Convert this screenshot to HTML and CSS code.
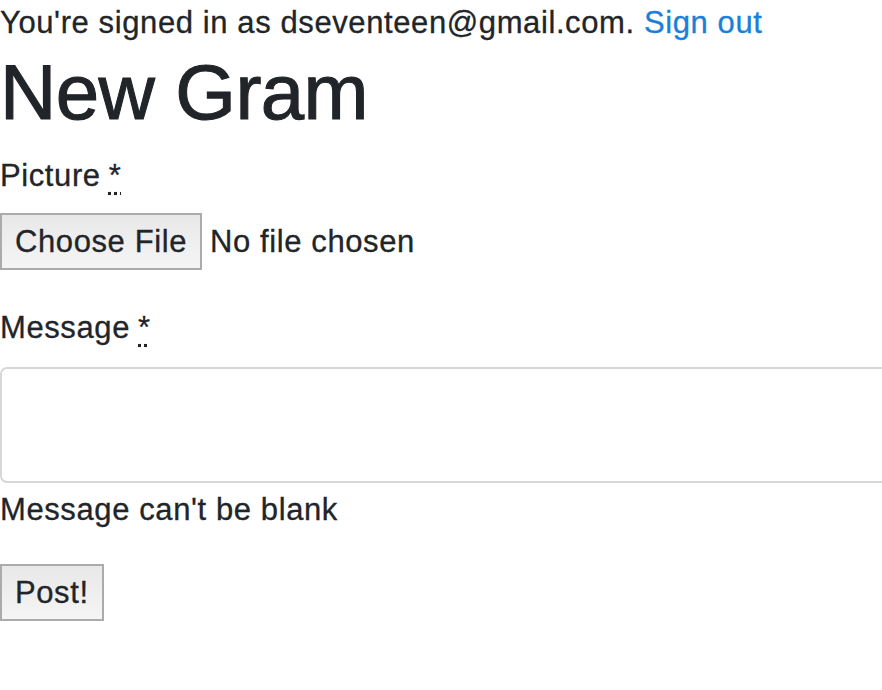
FILE: index.html
```html
<!DOCTYPE html>
<html lang="en">
<head>
<meta charset="utf-8">
<title>New Gram</title>
<link rel="stylesheet" href="styles.css">
</head>
<body>
<p class="signin">You're signed in as dseventeen@gmail.com. <a href="#" class="link">Sign out</a></p>
<h1 class="title">New Gram</h1>
<form class="form">
  <div class="group group-file">
    <label class="label">Picture<abbr class="req" title="required">*</abbr></label>
    <div class="file">
      <span class="btn">Choose File</span>
      <span class="file-text">No file chosen</span>
    </div>
  </div>
  <div class="group group-msg">
    <label class="label">Message<abbr class="req" title="required">*</abbr></label>
    <div class="textarea"></div>
    <div class="error">Message can't be blank</div>
  </div>
  <div class="actions">
    <span class="btn btn-post">Post!</span>
  </div>
</form>
</body>
</html>
```
FILE: styles.css
```css
html, body {
  margin: 0;
  padding: 0;
  background: #fff;
}
body {
  font-family: "Liberation Sans", Arial, sans-serif;
  font-size: 31px;
  letter-spacing: 0.6px;
  line-height: 45px;
  color: #212529;
  overflow: hidden;
  -webkit-text-stroke: 0.3px currentColor;
}
.signin {
  margin: 0;
}
.link {
  color: #1a7fd9;
  text-decoration: none;
}
.title {
  margin: 0 0 14px 0;
  font-size: 78px;
  line-height: 94px;
  font-weight: 400;
  letter-spacing: -0.6px;
  -webkit-text-stroke: 1.1px currentColor;
}
.form {
  margin: 0;
}
.label {
  display: block;
  margin-bottom: 15px;
}
.req {
  display: inline-block;
  margin-left: 8px;
  text-decoration: underline dotted;
  text-underline-offset: 6px;
  cursor: help;
}
.file {
  display: flex;
  align-items: center;
  gap: 8px;
}
.btn {
  display: inline-flex;
  align-items: center;
  box-sizing: border-box;
  height: 57px;
  padding: 0 13px;
  border: 2px solid #ababab;
  background: linear-gradient(#e8e8e8, #f5f5f5);
  font-size: 31px;
  color: #212529;
}
.group-file {
  margin-bottom: 35px;
}
.group-msg .label {
  margin-bottom: 17px;
}
.textarea {
  box-sizing: border-box;
  height: 116px;
  width: 900px;
  border: 2px solid #d7d7d7;
  border-radius: 7px;
}
.error {
  margin-top: 4px;
}
.actions {
  margin-top: 32px;
}
```
